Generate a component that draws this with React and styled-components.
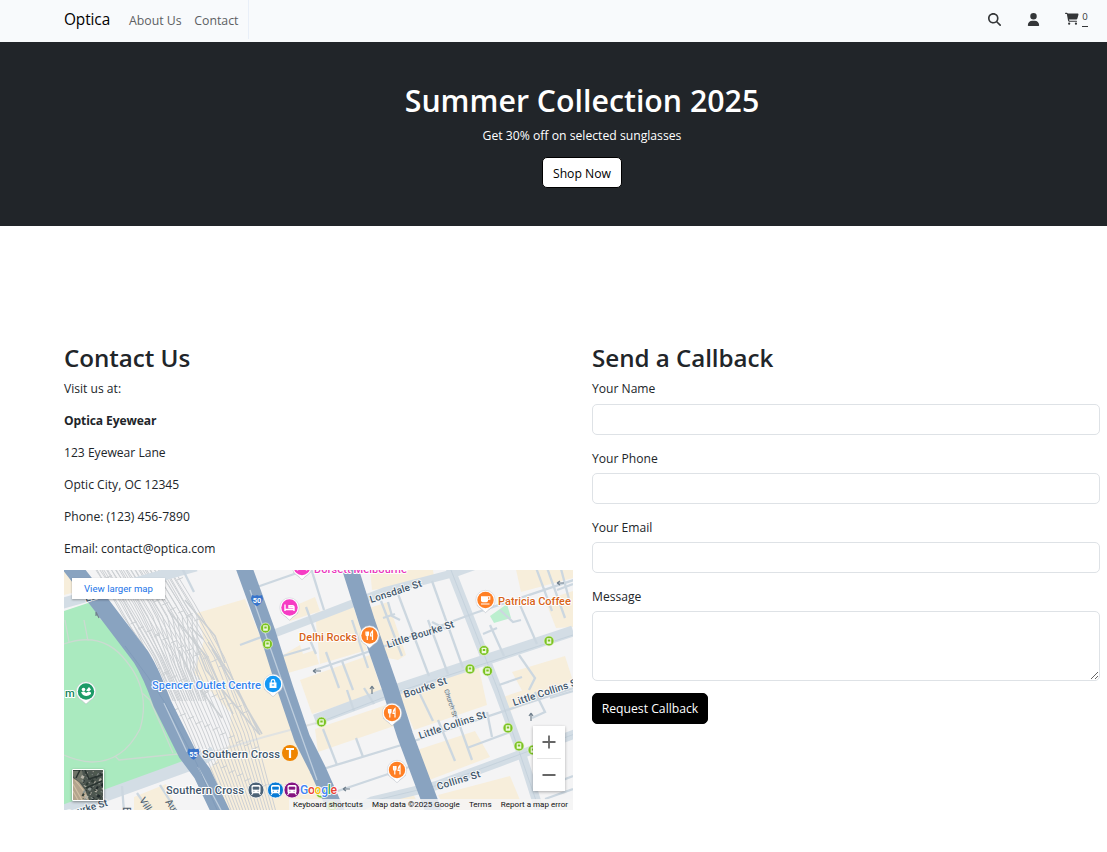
import React from "react";
import styled, { createGlobalStyle } from "styled-components";
import { FaMagnifyingGlass, FaUser, FaCartShopping } from "react-icons/fa6";

const GlobalStyle = createGlobalStyle`
  *, *::before, *::after { box-sizing: border-box; }
  body {
    margin: 0;
    background: #fff;
    color: #212529;
    font-family: "Open Sans", "Noto Sans", sans-serif;
    font-size: 12.1px;
    line-height: 19.2px;
    overflow: hidden;
  }
`;

const Header = styled.header`
  display: flex;
  align-items: center;
  height: 42px;
  padding: 0 19px 0 64px;
  background: #f8fafc;
`;

const Brand = styled.a`
  width: 65px;
  color: #000;
  font-size: 15.4px;
  letter-spacing: -0.1px;
  padding-bottom: 3px;
`;

const Nav = styled.nav`
  display: flex;
  align-self: flex-start;
  align-items: center;
  gap: 12.6px;
  height: 39px;
  padding: 2px 9.5px 0 0;
  border-right: 1px solid #e9eff8;
`;

const NavLink = styled.a`
  color: #5d6063;
  font-size: 12.3px;
  white-space: nowrap;
`;

const Actions = styled.div`
  display: flex;
  align-items: center;
  margin-left: auto;
  padding-bottom: 4px;
  color: #343638;
`;

const IconLink = styled.a`
  display: flex;
  margin-right: ${(p) => p.$gap}px;
  svg { display: block; height: ${(p) => p.$size || 13}px; width: auto; }
`;

const CartCount = styled.span`
  width: 6px;
  margin-left: 3px;
  height: 15px;
  font-size: 9.6px;
  line-height: 9px;
  text-align: center;
  border-bottom: 1px solid #343638;
`;

const Hero = styled.section`
  display: flex;
  flex-direction: column;
  align-items: center;
  height: 184px;
  padding: 40px 0 0 57px;
  background: #212529;
  color: #fff;
`;

const HeroTitle = styled.h1`
  margin: 0 0 6px;
  font-size: 30.3px;
  font-weight: 600;
  line-height: 38.4px;
`;

const HeroText = styled.p`
  margin: 0 0 11.6px;
  font-size: 12.2px;
`;

const Paragraph = styled.p`
  margin: 0 0 12.8px;
  font-weight: ${(p) => (p.$strong ? 700 : 400)};
  letter-spacing: ${(p) => (p.$strong ? "-0.12px" : "normal")};
`;

const Button = styled.button`
  width: ${(p) => p.$width}px;
  height: 31px;
  padding: ${(p) => (p.$dark ? "2px 0 0" : "1px 0 0")};
  border: 1px solid #000;
  border-radius: 5px;
  background: ${(p) => (p.$dark ? "#000" : "#fff")};
  color: ${(p) => (p.$dark ? "#fff" : "#000")};
  font: inherit;
  font-size: 12.2px;
`;

const Main = styled.main`
  display: grid;
  grid-template-columns: 509px 508px;
  column-gap: 19px;
  padding: 116px 7px 0 64px;
`;

const Column = styled.section`
  min-width: 0;
`;

const Heading = styled.h2`
  margin: 0 0 5.6px;
  font-size: 24.2px;
  font-weight: 600;
  line-height: 31px;
  letter-spacing: -0.05px;
`;

const Field = styled.label`
  display: block;
  margin-bottom: 12.4px;
`;

const FieldName = styled.span`
  display: block;
  padding-top: ${(p) => (p.$first ? 0 : 1.6)}px;
  margin-bottom: ${(p) => (p.$first ? 6.4 : 4.8)}px;
`;

const Input = styled.input`
  display: block;
  width: 100%;
  height: 31px;
  border: 1px solid #dee2e6;
  border-radius: 5px;
  padding: 4px 9px;
  font: inherit;
  background: #fff;
`;

const TextArea = styled.textarea`
  display: block;
  width: 100%;
  height: 70px;
  border: 1px solid #dee2e6;
  border-radius: 5px;
  padding: 4px 9px;
  margin-bottom: -1px;
  font: inherit;
  resize: vertical;
`;

const MapFrame = styled.div`
  position: relative;
  height: 240px;
  margin-top: -1px;
  overflow: hidden;
  font-family: Roboto, sans-serif;
`;

const MapDrawing = styled.svg`
  display: block;
  width: 509px;
  height: 240px;
`;

const LargerMap = styled.a`
  position: absolute;
  left: 8px;
  top: 8px;
  width: 93px;
  height: 21px;
  background: #fff;
  box-shadow: 0 1px 2px rgba(0, 0, 0, 0.3);
  color: #1a73e8;
  font-size: 9.6px;
  line-height: 21px;
  text-align: center;
`;

const ZoomControl = styled.div`
  position: absolute;
  right: 8px;
  top: 156px;
  width: 32px;
  height: 65px;
  background: #fff;
  box-shadow: 0 1px 3px rgba(0, 0, 0, 0.3);
  svg { display: block; }
`;

const Thumbnail = styled.div`
  position: absolute;
  left: 8px;
  top: 199px;
  width: 32px;
  height: 32px;
  border: 1px solid #fff;
  border-radius: 1px;
  overflow: hidden;
  box-shadow: 0 1px 3px rgba(0, 0, 0, 0.4);
  svg { display: block; }
`;

const Attribution = styled.div`
  position: absolute;
  right: 0;
  bottom: 0;
  display: flex;
  justify-content: space-between;
  width: 284px;
  height: 11px;
  padding: 0 5px 0 4px;
  background: rgba(245, 245, 245, 0.82);
  color: #111;
  font-size: 8.05px;
  line-height: 11px;
  white-space: nowrap;
`;

const highways = [
  "M68 562L100 603L141 657C150 671 156 686 162 703L187 753L202 773L222 815",
  "M243 565L267 631L285 688L302 738L318 770L338 815",
  "M349 565L367 622L390 688L405 735L435 815",
];

const wideRoads = [
  ["M60 604L196 566", 11],
  ["M60 812L195 763L214 752", 12],
  ["M273 634L315 618L385 591L458 572L480 564", 8],
  ["M449 565L488 665L498 690L522 755L540 812", 9],
  ["M315 720L398 689L470 665L573 631", 11],
  ["M345 815L372 801L435 786L500 762L580 732", 9],
];

const sideRoads = [
  "M257 587L297 573", "M240 645L275 632", "M315 670L388 645L475 613L580 578",
  "M310 773L408 743L522 705L580 686", "M320 797L412 766",
  "M182 568L194 592", "M94 604L102 620", "M310 565L324 610", "M398 594L429 676",
  "M432 581L463 668", "M381 601L402 656", "M383 618L395 614", "M388 602L392 616L400 620",
  "M428 620L448 674", "M352 620L368 668", "M342 661L353 690", "M326 652L339 688",
  "M490 625L504 656", "M483 634L497 628", "M500 610L513 622L521 620", "M520 605L537 644",
  "M535 565L552 611", "M546 565L565 618", "M557 590L573 584", "M519 655L535 678L529 690",
  "M499 685L522 677", "M560 565L570 603", "M418 690L433 721", "M447 690L472 760",
  "M438 720L455 761", "M487 712L492 737", "M467 748L510 732", "M535 692L545 712L532 718",
  "M550 698L573 691", "M323 729L337 765", "M356 738L363 757", "M347 690L354 711",
  "M306 607L317 637", "M283 656L310 648", "M310 640L316 654", "M122 786L124 812",
  "M137 793L150 812", "M160 785L177 812", "M547 786L573 776", "M364 688L374 704",
  "M432 622L446 629", "M545 799L573 789",
];

const yellowBlocks = [
  "M197 613L245 599L282 690L312 773L330 812L222 812L205 775L229 745L231 713L194 673L204 640Z",
  "M285 610L315 597L320 611L290 621Z",
  "M283 655L300 645L303 654L315 650L319 664L288 673Z",
  "M315 613L352 602L367 650L320 664Z",
  "M300 680L370 655L382 692L312 714Z",
  "M370 570L432 565L434 576L400 586L372 590Z",
  "M369 608L388 602L406 655L398 660L388 658Z",
  "M398 692L478 664L487 705L414 730Z",
  "M315 729L389 704L394 726L318 752Z",
  "M411 752L475 731L490 757L424 782Z",
  "M500 698L548 682L560 692L507 712Z",
  "M512 672L565 656L573 681L525 696Z",
  "M515 565L573 565L573 578L521 592Z",
  "M545 600L573 591L573 627L556 628Z",
  "M360 809L413 794L423 812Z",
  "M438 795L510 776L525 812L447 812Z",
  "M134 797L166 784L178 812L134 812Z",
  "M64 570L69 570L83 590L64 595Z",
];

const railTracks = Array.from({ length: 21 }, (_, i) => {
  const t = i / 20;
  const bend = Math.sin(i * 1.7) * 1.5;
  return `M${96 + 78 * t} 570L${118 + 76 * t + bend} 604L${147 + 78 * t - bend} 657L${182 + 73 * t} 733L${217 + 59 * t} 812`;
});

const yardTracks = Array.from({ length: 16 }, (_, i) => {
  const t = i / 15;
  return `M${96 + 72 * t} 568L${123 + 74 * t} 616L${150 + 47 * t} ${655 + 18 * t}L${171 + 35 * t} 701`;
});

const railTies = Array.from({ length: 66 }, (_, i) => {
  const down = (i * 19) % 220;
  const x = 106 + down * 0.49 + ((i * 31) % 72);
  return `M${x} ${578 + down}l6-2.5`;
}).join("");

const platforms = "M185 600L215 636L225 663M190 627L203 639M192 634L206 670L259 734M208 642L230 674L260 735M212 649L262 734M179 650L194 681L222 718M168 610L206 656L233 714";

const streetLabels = [
  ["Lonsdale St", 371, 603, -18, 54],
  ["Little Bourke St", 388, 648, -17.5, 70],
  ["Bourke St", 405, 698, -19, 45],
  ["Little Collins St", 420, 739, -18, 70],
  ["Little Collins St", 514, 706, -18, 70],
  ["Collins St", 438, 790, -17, 45],
  ["La Trobe St", 86, 602, -17, 56],
  ["Bourke St", 67, 818, -17, 43],
];

const stations = [
  [265.5, 628], [267.5, 644], [321.5, 722], [470, 669], [484, 650.5], [487.5, 671],
  [549, 641], [508, 728], [519, 746], [533, 750], [321, 793], [332, 806],
];

const pins = [
  [289.5, 607.5, "#f63cc4", "bed"], [302, 567, "#f63cc4", "bed"],
  [369.5, 635.5, "#ff7f24", "food"], [392, 713, "#ff7f24", "food"],
  [397, 770, "#ff7f24", "food"], [485.5, 600, "#ff7f24", "cup"],
  [273, 684, "#1398f4", "bag"], [86, 691.5, "#1c9b67", "park"],
];

const glyphs = {
  bed: <path d="M-4.5-3v6.5M-4.5 2h9V0H-.5V-1.8H3q1.5 0 1.5 2v3.3" fill="none" stroke="#fff" strokeWidth="1.4" />,
  food: <path d="M-3.5-4v3q0 1.5 1.3 1.5Q-1 .5-1-1v-3M-2.2-4v8.5M3 4.5v-9Q1-3 1 .5h2" fill="none" stroke="#fff" strokeWidth="1.2" />,
  cup: <g><path d="M-4.5-3.8h7v4.3q0 1.7-1.7 1.7h-3.6q-1.7 0-1.7-1.7Z" fill="#fff" /><path d="M2.5-3.2h1.8v2.4H2.5M-4.5 4h8.5" fill="none" stroke="#fff" strokeWidth="1.1" /></g>,
  bag: <g><path d="M-3.5-1.5h7v5.5h-7Z" fill="#fff" /><path d="M-1.8-1v-1.6q0-1.8 1.8-1.8t1.8 1.8V-1" fill="none" stroke="#fff" strokeWidth="1.2" /><path d="M-1.2 1h2.4" stroke="#1398f4" /></g>,
  park: <g fill="#fff"><circle cx="-2.5" cy="-2" r="1.8" /><path d="M0-1L3-4.5L5-2L3 0Z" /><path d="M-5 1q3-2 5 .5q3-2 5-.5v1.5q-4 3.5-8 1Z" /></g>,
};

function Pin({ x, y, color, kind }) {
  return (
    <g transform={`translate(${x} ${y})`}>
      <path d="M-8.6 5.2L0 12.6L8.6 5.2Z" fill="#fff" stroke="#b9bec6" strokeWidth=".6" />
      <circle r="9.7" fill="#fff" stroke="#c4c9d0" strokeWidth=".5" />
      <path d="M-7.5 5L0 11.8L7.5 5Z" fill="#fff" />
      <circle r="8.2" fill={color} />
      {glyphs[kind]}
    </g>
  );
}

function Transit({ x, color }) {
  return (
    <g transform={`translate(${x} 790)`}>
      <circle r="8" fill={color} stroke="#fff" strokeWidth=".8" />
      <rect x="-4.5" y="-5" width="9" height="8.3" rx="1.5" fill="#fff" />
      <path d="M-2.9-3h5.8v2.3h-5.8ZM-2.6 1.3h1M1.6 1.3h1" fill={color} stroke={color} strokeWidth=".7" />
      <path d="M-3 3L-4.5 5M3 3L4.5 5" stroke="#fff" strokeWidth="1.1" />
    </g>
  );
}

function Shield({ x, y, label }) {
  return (
    <g transform={`translate(${x} ${y})`}>
      <path d="M-5-5.5Q-2-4 0-5.5Q2-4 5-5.5L6-2Q5 3 0 5.8Q-5 3-6-2Z" fill="#3874cb" />
      <text y="2.6" fill="#fff" fontSize="7.4" fontWeight="700" textAnchor="middle">{label}</text>
    </g>
  );
}

function PlaceLabel({ x, y, color = "#41566b", width, children }) {
  return (
    <text x={x} y={y} fill={color} fontSize="11.2" fontWeight="500" textLength={width}
      stroke="#fff" strokeWidth="2" strokeLinejoin="round" paintOrder="stroke">{children}</text>
  );
}

function CityMap() {
  return (
    <MapDrawing viewBox="64 570 509 240" aria-label="Map of Southern Cross">
      <rect x="64" y="570" width="509" height="240" fill="#f4f4f5" />
      {yellowBlocks.map((d) => <path key={d} d={d} fill="#f7eedb" />)}
      <path d="M214 752L264 737L320 722" fill="none" stroke="#e1e3e2" strokeWidth="2" />
      <path d="M64 611L91 602L101 612L125 646Q147 676 154 697L184 765L64 806Z" fill="#aaeabf" />
      <path d="M490 616L507 604L511 618L494 623Z" fill="#bcefcf" />
      <g fill="none" stroke="#cdd0d4" strokeWidth="1">
        {railTracks.map((d) => <path key={d} d={d} />)}
      </g>
      <g fill="none" stroke="#ccd0d3" strokeWidth="1">
        {yardTracks.map((d) => <path key={d} d={d} />)}
        <path d={railTies} />
        <path d={platforms} strokeWidth="1.6" />
      </g>
      <path d="M64 644Q103 630 127 662Q151 692 140 729Q123 762 92 762Q77 761 64 755M142 693L150 700L173 753M115 756L119 760L178 754L190 757M84 620L88 641M65 620L69 642" fill="none" stroke="#cbdad1" strokeWidth="1.3" />
      {wideRoads.map(([d, w]) => <path key={d} d={d} fill="none" stroke="#d3dde5" strokeWidth={w} />)}
      <g fill="none" stroke="#ccd7e0" strokeWidth="2.3">
        {sideRoads.map((d) => <path key={d} d={d} />)}
      </g>
      <path d="M315 724L400 691L480 665L573 635M449 565L498 690L540 812M315 815L372 801L435 786L580 732" fill="none" stroke="#bfcdd8" strokeWidth=".7" />
      {highways.map((d, i) => <path key={d} d={d} fill="none" stroke="#89a3c0" strokeWidth={i ? 16.2 : 18} />)}
      <path d="M250 590L285 690L317 780M164 703L187 752M198 767L222 812" fill="none" stroke="#bdcddd" strokeWidth="1.3" />
      <path d="M125 646L148 677L165 703L196 762L218 812" fill="none" stroke="#7e99b9" strokeWidth=".8" />
      <path d="M313 671h8M313 671l3-2M313 671l3 2M343 789h7M343 789l3-2M343 789l3 2M557 583h7M557 583l3-2M557 583l3 2M99 618l-3-6M96 612l0 4M372 686v8M372 686l-2 3M372 686l2 3M531 713v8M531 713l-2 3M531 713l2 3" fill="none" stroke="#71808e" strokeWidth="1.2" />
      {streetLabels.map(([name, x, y, angle, width]) => (
        <text key={name + x} transform={`translate(${x} ${y}) rotate(${angle})`} textLength={width}
          fill="#41566b" fontSize="10" fontWeight="500" stroke="#f6f7f8" strokeWidth="1.8" paintOrder="stroke">{name}</text>
      ))}
      <text transform="translate(444 690) rotate(72)" fill="#64717c" fontSize="6.7">Church St</text>
      <text transform="translate(139 800) rotate(58)" fill="#4c5b69" fontSize="10">Village</text>
      <text transform="translate(165 802) rotate(55)" fill="#4c5b69" fontSize="10">Aurora</text>
      <text transform="translate(123 807) rotate(90)" fill="#4c5b69" fontSize="10">Ellis</text>
      {stations.map(([x, y]) => (
        <g key={`${x}-${y}`} transform={`translate(${x} ${y})`}>
          <circle r="5" fill="#7bc322" stroke="#e8f2d9" strokeWidth=".7" />
          <rect x="-2.3" y="-2.8" width="4.6" height="5.5" rx=".5" fill="#eff9dd" />
          <rect x="-1.2" y="-1.5" width="2.4" height="2" fill="#7bc322" />
        </g>
      ))}
      {pins.map(([x, y, color, kind]) => <Pin key={`${x}-${y}`} x={x} y={y} color={color} kind={kind} />)}
      <PlaceLabel x={314} y={573} width={93} color="#ea36bd">Dorsett Melbourne</PlaceLabel>
      <PlaceLabel x={299} y={641} width={58} color="#d76319">Delhi Rocks</PlaceLabel>
      <PlaceLabel x={498} y={605} width={73} color="#d76319">Patricia Coffee</PlaceLabel>
      <PlaceLabel x={152} y={689} width={109} color="#3584ed">Spencer Outlet Centre</PlaceLabel>
      <PlaceLabel x={202} y={757.5} width={78}>Southern Cross</PlaceLabel>
      <PlaceLabel x={166} y={794} width={78}>Southern Cross</PlaceLabel>
      <PlaceLabel x={65} y={697} color="#16845c">m</PlaceLabel>
      <Shield x={257} y={600.5} label="50" />
      <Shield x={193.5} y={754} label="55" />
      <circle cx="290" cy="753" r="8" fill="#ef8500" />
      <path d="M286 749H294M290 749V758" stroke="#fff" strokeWidth="2.2" />
      <Transit x={256} color="#4d6377" />
      <Transit x={275.5} color="#087bd5" />
      <Transit x={292} color="#851481" />
      <text x="300" y="793.5" fontSize="12.2" fontWeight="500" textLength="37" stroke="#fff" strokeWidth="1.6" paintOrder="stroke">
        <tspan fill="#4285f4">G</tspan><tspan fill="#ea4335">o</tspan><tspan fill="#fbbc05">o</tspan><tspan fill="#4285f4">g</tspan><tspan fill="#34a853">l</tspan><tspan fill="#ea4335">e</tspan>
      </text>
    </MapDrawing>
  );
}

const roofs = Array.from({ length: 65 }, (_, i) => {
  const x = 9 + ((i * 17) % 23);
  const y = (i * 11) % 31;
  return { x, y, w: 1 + (i % 3), h: 1 + ((i * 2) % 4), fill: ["#222b2c", "#8b938e", "#4f5b50", "#b6b3a7", "#303b35"][i % 5] };
});

function Satellite() {
  return (
    <svg width="30" height="30" viewBox="0 0 30 30">
      <rect width="30" height="30" fill="#4d5650" />
      <path d="M0 8L6 12L12 20L16 30H0Z" fill="#b3a48d" />
      <path d="M0 0H9L11 14L5 11L0 6Z" fill="#6f7468" />
      <path d="M2 10L10 20L14 30M0 14L9 30M0 21L5 30" fill="none" stroke="#d0bfa3" strokeWidth="1.2" />
      {roofs.map((r, i) => <rect key={i} x={r.x} y={r.y} width={r.w} height={r.h} fill={r.fill} transform={`rotate(28 ${r.x} ${r.y})`} />)}
      <path d="M0 0L7 0L3 8M12 0L16 9L29 5M13 18L29 11" fill="none" stroke="#293330" strokeWidth="1.5" />
    </svg>
  );
}

const addressLines = ["123 Eyewear Lane", "Optic City, OC 12345", "Phone: (123) 456-7890", "Email: contact@optica.com"];

export default function App() {
  return (
    <>
      <GlobalStyle />
      <Header>
        <Brand>Optica</Brand>
        <Nav>
          <NavLink>About Us</NavLink>
          <NavLink>Contact</NavLink>
        </Nav>
        <Actions>
          <IconLink $gap={25.5} aria-label="Search"><FaMagnifyingGlass /></IconLink>
          <IconLink $gap={25.5} aria-label="Account"><FaUser /></IconLink>
          <IconLink $gap={0} $size={13.6} aria-label="Cart"><FaCartShopping /></IconLink>
          <CartCount>0</CartCount>
        </Actions>
      </Header>
      <Hero>
        <HeroTitle>Summer Collection 2025</HeroTitle>
        <HeroText>Get 30% off on selected sunglasses</HeroText>
        <Button $width={80}>Shop Now</Button>
      </Hero>
      <Main>
        <Column>
          <Heading>Contact Us</Heading>
          <Paragraph>Visit us at:</Paragraph>
          <Paragraph $strong>Optica Eyewear</Paragraph>
          {addressLines.map((line) => <Paragraph key={line}>{line}</Paragraph>)}
          <MapFrame>
            <CityMap />
            <LargerMap>View larger map</LargerMap>
            <Thumbnail><Satellite /></Thumbnail>
            <ZoomControl>
              <svg width="32" height="65" viewBox="0 0 32 65">
                <path d="M9.5 16h13M16 9.5v13M9.5 49h13" stroke="#666" strokeWidth="1.8" />
                <path d="M4 32.5h24" stroke="#e6e6e6" />
              </svg>
            </ZoomControl>
            <Attribution>
              <span>Keyboard shortcuts</span><span>Map data ©2025 Google</span><span>Terms</span><span>Report a map error</span>
            </Attribution>
          </MapFrame>
        </Column>
        <Column>
          <Heading>Send a Callback</Heading>
          {["Your Name", "Your Phone", "Your Email"].map((name, i) => (
            <Field key={name}><FieldName $first={i === 0}>{name}</FieldName><Input /></Field>
          ))}
          <Field><FieldName>Message</FieldName><TextArea /></Field>
          <Button $width={116} $dark>Request Callback</Button>
        </Column>
      </Main>
    </>
  );
}
